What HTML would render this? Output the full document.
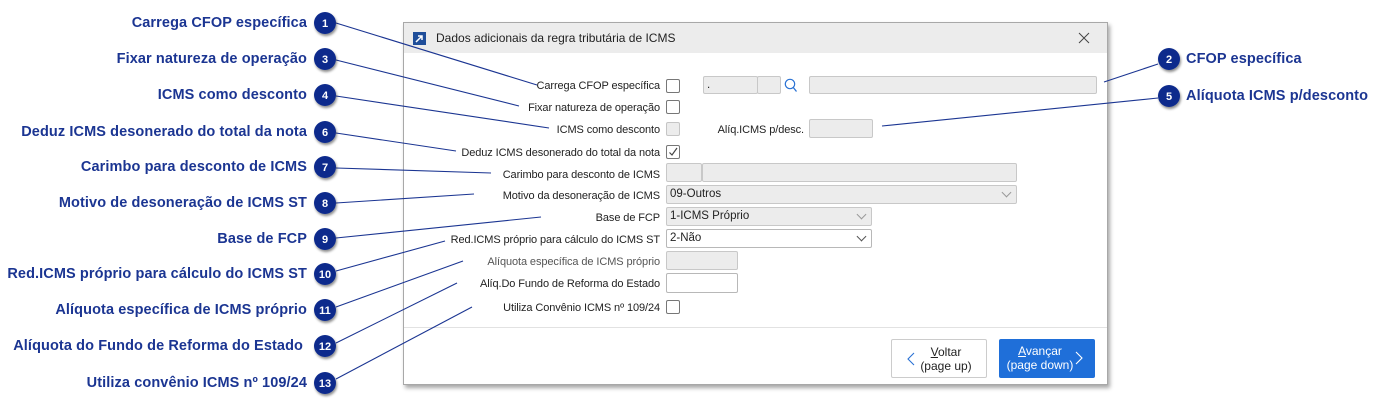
<!DOCTYPE html>
<html><head><meta charset="utf-8"><style>
body{margin:0;width:1387px;height:409px;background:#fff;position:relative;overflow:hidden;font-family:"Liberation Sans",sans-serif}
.cl{position:absolute;right:1080px;font-weight:bold;font-size:14.5px;color:#1b3592;white-space:nowrap;letter-spacing:0.1px;line-height:18px}
.cr{position:absolute;left:1186px;font-weight:bold;font-size:14.5px;color:#1b3592;white-space:nowrap;letter-spacing:0.1px;line-height:18px}
.dlg{position:absolute;left:403px;top:22px;width:703px;height:361px;background:#fff;border:1px solid #a8a8a8;box-shadow:2px 3px 4px rgba(0,0,0,.35)}
.tb{position:absolute;left:0;top:0;right:0;height:30px;background:#ececec}
.fl{position:absolute;right:447px;font-size:11px;color:#222;white-space:nowrap;letter-spacing:-0.1px;line-height:14px}
.fl.g{color:#555}
.in{position:absolute;box-sizing:border-box;border:1px solid #c8c8c8;background:#ececec;border-radius:2px;font-size:11.5px;line-height:16px;padding-left:3px;color:#222}
.in.w{background:#fff;border-color:#b8b8b8}
.cb{position:absolute;box-sizing:border-box;width:14px;height:14px;border:1px solid #777;border-radius:2px;background:#fff}
.cb.d{border-color:#c5c5c5;background:#ececec}
.chev{position:absolute;right:6px;top:3px;width:6px;height:6px;border-right:1px solid #999;border-bottom:1px solid #999;transform:rotate(45deg)}
.btn{position:absolute;box-sizing:border-box;top:316px;height:39px;font-size:12px;text-align:center;line-height:14px;border-radius:2px}
</style></head><body>
<svg width="1387" height="409" style="position:absolute;left:0;top:0;z-index:3;pointer-events:none">
<defs><filter id="s" x="-50%" y="-50%" width="200%" height="200%"><feDropShadow dx="1" dy="2" stdDeviation="1.2" flood-opacity=".45"/></filter></defs>
<g stroke="#1b3592" stroke-width="1.1" fill="none">
<line x1="336" y1="23" x2="537" y2="85"/><line x1="336" y1="60" x2="519" y2="106"/>
<line x1="336" y1="96" x2="549" y2="128"/><line x1="336" y1="133" x2="456" y2="151"/>
<line x1="336" y1="168" x2="491" y2="173"/><line x1="336" y1="203" x2="474" y2="194"/>
<line x1="336" y1="238" x2="541" y2="217"/><line x1="336" y1="271" x2="445" y2="241"/>
<line x1="336" y1="307" x2="463" y2="261"/><line x1="336" y1="343" x2="457" y2="283"/>
<line x1="336" y1="379" x2="472" y2="307"/>
<line x1="1158" y1="64" x2="1104" y2="82"/><line x1="1158" y1="98" x2="882" y2="126"/>
</g>
<g fill="#0d2a8c" filter="url(#s)">
<circle cx="325" cy="23" r="11"/><circle cx="325" cy="59" r="11"/><circle cx="325" cy="95" r="11"/>
<circle cx="325" cy="132" r="11"/><circle cx="325" cy="167" r="11"/><circle cx="325" cy="203" r="11"/>
<circle cx="325" cy="239" r="11"/><circle cx="325" cy="274" r="11"/><circle cx="325" cy="310" r="11"/>
<circle cx="325" cy="346" r="11"/><circle cx="325" cy="383" r="11"/>
<circle cx="1169" cy="59" r="11"/><circle cx="1169" cy="96" r="11"/>
</g>
<g fill="#fff" font-family="Liberation Sans" font-weight="bold" font-size="11" text-anchor="middle">
<text x="325" y="27">1</text><text x="325" y="63">3</text><text x="325" y="99">4</text><text x="325" y="136">6</text>
<text x="325" y="171">7</text><text x="325" y="207">8</text><text x="325" y="243">9</text><text x="325" y="278">10</text>
<text x="325" y="314">11</text><text x="325" y="350">12</text><text x="325" y="387">13</text>
<text x="1169" y="63">2</text><text x="1169" y="100">5</text>
</g>
</svg>
<div class="cl" style="top:14px">Carrega CFOP específica</div>
<div class="cl" style="top:50px">Fixar natureza de operação</div>
<div class="cl" style="top:86px">ICMS como desconto</div>
<div class="cl" style="top:123px">Deduz ICMS desonerado do total da nota</div>
<div class="cl" style="top:158px">Carimbo para desconto de ICMS</div>
<div class="cl" style="top:194px">Motivo de desoneração de ICMS ST</div>
<div class="cl" style="top:230px">Base de FCP</div>
<div class="cl" style="top:265px">Red.ICMS próprio para cálculo do ICMS ST</div>
<div class="cl" style="top:301px">Alíquota específica de ICMS próprio</div>
<div class="cl" style="top:337px;right:1084px">Alíquota do Fundo de Reforma do Estado</div>
<div class="cl" style="top:374px">Utiliza convênio ICMS nº 109/24</div>
<div class="cr" style="top:50px">CFOP específica</div>
<div class="cr" style="top:87px">Alíquota ICMS p/desconto</div>

<div class="dlg">
<div class="tb">
<div style="position:absolute;left:9px;top:9px;width:13px;height:13px;background:#1f4e9a"><svg width="13" height="13"><path d="M3 10 L9 4 M5 4 H9 V8" stroke="#fff" stroke-width="1.5" fill="none"/></svg></div>
<div style="position:absolute;left:32px;top:8px;font-size:12px;color:#222">Dados adicionais da regra tributária de ICMS</div>
<svg style="position:absolute;left:674px;top:9px" width="12" height="12"><path d="M1 1L11 11M11 1L1 11" stroke="#444" stroke-width="1"/></svg>
</div>
<div class="fl" style="top:56px">Carrega CFOP específica</div>
<div class="cb" style="left:262px;top:56px"></div>
<div class="in" style="left:299px;top:53px;width:55px;height:18px">.</div>
<div class="in" style="left:353px;top:53px;width:24px;height:18px"></div>
<svg style="position:absolute;left:380px;top:55px" width="14" height="15"><circle cx="6" cy="6" r="4.7" stroke="#2a72d4" stroke-width="1.2" fill="none"/><path d="M9.3 9.5L12.5 13.5" stroke="#2a72d4" stroke-width="1.3"/></svg>
<div class="in" style="left:405px;top:53px;width:288px;height:18px"></div>
<div class="fl" style="top:78px">Fixar natureza de operação</div>
<div class="cb" style="left:262px;top:77px"></div>
<div class="fl" style="top:100px">ICMS como desconto</div>
<div class="cb d" style="left:262px;top:99px"></div>
<div class="fl" style="top:100px;right:303px">Alíq.ICMS p/desc.</div>
<div class="in" style="left:405px;top:96px;width:64px;height:19px"></div>
<div class="fl" style="top:123px">Deduz ICMS desonerado do total da nota</div>
<div class="cb" style="left:262px;top:122px"><svg width="12" height="12" style="position:absolute;left:0;top:0"><path d="M2.5 6.5L5 9L10 2" stroke="#444" stroke-width="1.2" fill="none"/></svg></div>
<div class="fl" style="top:145px">Carimbo para desconto de ICMS</div>
<div class="in" style="left:262px;top:140px;width:36px;height:19px"></div>
<div class="in" style="left:298px;top:140px;width:315px;height:19px"></div>
<div class="fl" style="top:166px">Motivo da desoneração de ICMS</div>
<div class="in" style="left:262px;top:162px;width:351px;height:19px">09-Outros<div class="chev"></div></div>
<div class="fl" style="top:188px">Base de FCP</div>
<div class="in" style="left:262px;top:184px;width:206px;height:19px">1-ICMS Próprio<div class="chev"></div></div>
<div class="fl" style="top:210px">Red.ICMS próprio para cálculo do ICMS ST</div>
<div class="in w" style="left:262px;top:206px;width:206px;height:19px">2-Não<div class="chev" style="border-color:#555"></div></div>
<div class="fl g" style="top:232px">Alíquota específica de ICMS próprio</div>
<div class="in" style="left:262px;top:228px;width:72px;height:19px"></div>
<div class="fl" style="top:254px">Alíq.Do Fundo de Reforma do Estado</div>
<div class="in w" style="left:262px;top:250px;width:72px;height:20px"></div>
<div class="fl" style="top:278px">Utiliza Convênio ICMS nº 109/24</div>
<div class="cb" style="left:262px;top:277px"></div>
<div style="position:absolute;left:0;right:0;top:304px;border-top:1px solid #e2e2e2"></div>
<div class="btn" style="left:487px;width:96px;border:1px solid #ccc;background:#fff;color:#222;padding-top:5px;padding-left:14px"><u>V</u>oltar<br>(page up)
<svg style="position:absolute;left:15px;top:12px" width="8" height="14"><path d="M7 1L1 7L7 13" stroke="#2a72d4" stroke-width="1.1" fill="none"/></svg></div>
<div class="btn" style="left:595px;width:96px;background:#1f6fd9;color:#fff;padding-top:5px;padding-right:14px"><u>A</u>vançar<br>(page down)
<svg style="position:absolute;right:12px;top:12px" width="8" height="14"><path d="M1 1L7 7L1 13" stroke="#fff" stroke-width="1.1" fill="none"/></svg></div>
</div>
</body></html>
